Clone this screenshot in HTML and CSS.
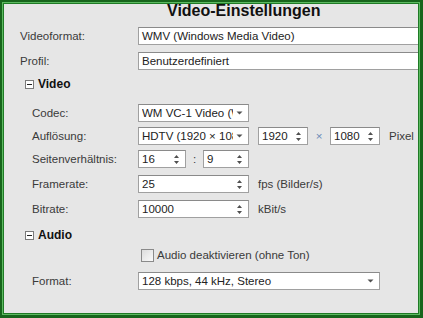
FILE: index.html
```html
<!DOCTYPE html>
<html lang="de">
<head>
    <meta charset="UTF-8">
    <meta name="viewport" content="width=device-width, initial-scale=1.0">
    <title>Video-Einstellungen</title>
    <link rel="stylesheet" href="styles.css">
</head>
<body>
    <div class="frame">
        <div class="frame-mid">
            <div class="content">
                <h1 class="title">Video-Einstellungen</h1>

                <div class="row top r-first">
                    <span class="label">Videoformat:</span>
                    <div class="field long">WMV (Windows Media Video)</div>
                </div>
                <div class="row top r7">
                    <span class="label">Profil:</span>
                    <div class="field long">Benutzerdefiniert</div>
                </div>

                <div class="row head r5">
                    <span class="toggle"></span>
                    <span>Video</span>
                </div>

                <div class="row sub r11">
                    <span class="label">Codec:</span>
                    <div class="field select w111">
                        <span class="val">WM VC-1 Video (W</span>
                        <svg class="drop" width="7" height="4" viewBox="0 0 7 4"><path d="M0.5 0.5H6.5L3.5 3.5Z" fill="#505050"/></svg>
                    </div>
                </div>
                <div class="row sub r5">
                    <span class="label">Auflösung:</span>
                    <div class="field select w111">
                        <span class="val">HDTV (1920 × 108</span>
                        <svg class="drop" width="7" height="4" viewBox="0 0 7 4"><path d="M0.5 0.5H6.5L3.5 3.5Z" fill="#505050"/></svg>
                    </div>
                    <div class="field spin w50 ml9">
                        <span class="val">1920</span>
                        <svg class="arrows" width="7" height="11" viewBox="0 0 7 11"><path d="M3.5 1L6 4H1Z M3.5 10L6 7H1Z" fill="#505050"/></svg>
                    </div>
                    <span class="times">×</span>
                    <div class="field spin w50">
                        <span class="val">1080</span>
                        <svg class="arrows" width="7" height="11" viewBox="0 0 7 11"><path d="M3.5 1L6 4H1Z M3.5 10L6 7H1Z" fill="#505050"/></svg>
                    </div>
                    <span class="unit">Pixel</span>
                </div>
                <div class="row sub r5">
                    <span class="label">Seitenverhältnis:</span>
                    <div class="field spin w48">
                        <span class="val">16</span>
                        <svg class="arrows" width="7" height="11" viewBox="0 0 7 11"><path d="M3.5 1L6 4H1Z M3.5 10L6 7H1Z" fill="#505050"/></svg>
                    </div>
                    <span class="colon">:</span>
                    <div class="field spin w46">
                        <span class="val">9</span>
                        <svg class="arrows" width="7" height="11" viewBox="0 0 7 11"><path d="M3.5 1L6 4H1Z M3.5 10L6 7H1Z" fill="#505050"/></svg>
                    </div>
                </div>
                <div class="row sub r7">
                    <span class="label">Framerate:</span>
                    <div class="field spin w111">
                        <span class="val">25</span>
                        <svg class="arrows" width="7" height="11" viewBox="0 0 7 11"><path d="M3.5 1L6 4H1Z M3.5 10L6 7H1Z" fill="#505050"/></svg>
                    </div>
                    <span class="unit">fps (Bilder/s)</span>
                </div>
                <div class="row sub r7">
                    <span class="label">Bitrate:</span>
                    <div class="field spin w111">
                        <span class="val">10000</span>
                        <svg class="arrows" width="7" height="11" viewBox="0 0 7 11"><path d="M3.5 1L6 4H1Z M3.5 10L6 7H1Z" fill="#505050"/></svg>
                    </div>
                    <span class="unit">kBit/s</span>
                </div>

                <div class="row head r8">
                    <span class="toggle"></span>
                    <span>Audio</span>
                </div>

                <div class="row sub r2">
                    <span class="label"></span>
                    <label class="check"><span class="box"></span>Audio deaktivieren (ohne Ton)</label>
                </div>
                <div class="row sub r8">
                    <span class="label">Format:</span>
                    <div class="field select w242">
                        <span class="val">128 kbps, 44 kHz, Stereo</span>
                        <svg class="drop" width="7" height="4" viewBox="0 0 7 4"><path d="M0.5 0.5H6.5L3.5 3.5Z" fill="#505050"/></svg>
                    </div>
                </div>
            </div>
        </div>
    </div>
</body>
</html>
```

FILE: styles.css
```css
* {
    margin: 0;
    padding: 0;
    box-sizing: border-box;
}

body {
    width: 423px;
    height: 318px;
    font-family: "Liberation Sans", Arial, sans-serif;
    font-size: 11.5px;
    color: #3a3a3a;
}

.frame {
    width: 423px;
    height: 318px;
    border: 2px solid #17651c;
    border-right-width: 3px;
    border-bottom-width: 3px;
}

.frame-mid {
    height: 100%;
    border: 1px solid #5cba60;
}

.content {
    height: 100%;
    border: 1px solid #1f7a26;
    background: #e6e6e6;
    overflow: hidden;
}

.title {
    font-size: 16px;
    font-weight: bold;
    color: #111;
    line-height: 18px;
    margin-top: -2px;
    padding-left: 163px;
}

.row {
    display: flex;
    align-items: center;
    height: 18px;
}

.r-first { margin-top: 7px; }
.r2 { margin-top: 2px; }
.r5 { margin-top: 5px; }
.r7 { margin-top: 7px; }
.r8 { margin-top: 8px; }
.r11 { margin-top: 11px; }

.top { padding-left: 16px; }
.top .label { width: 118px; flex: none; }

.sub { padding-left: 28px; }
.sub .label { width: 106px; flex: none; }

.head {
    padding-left: 21px;
    font-weight: bold;
    font-size: 12px;
    color: #111;
    gap: 4px;
}

.toggle {
    position: relative;
    width: 9px;
    height: 9px;
    border: 1px solid #7a7a7a;
    background: #fff;
}

.toggle::after {
    content: "";
    position: absolute;
    left: 1px;
    top: 3px;
    width: 5px;
    height: 1px;
    background: #222;
}

.field {
    display: flex;
    align-items: center;
    flex: none;
    height: 18px;
    background: #fff;
    border: 1px solid #a0a0a0;
    border-top-color: #8a8a8a;
    padding-left: 3px;
    color: #222;
    white-space: nowrap;
    overflow: hidden;
}

.long { width: 300px; }
.w46 { width: 46px; }
.w48 { width: 48px; }
.w50 { width: 50px; }
.w111 { width: 111px; }
.w242 { width: 242px; }
.ml9 { margin-left: 9px; }

.val {
    flex: 1;
    overflow: hidden;
}

.drop {
    flex: none;
    margin: 0 5px 0 3px;
}

.arrows {
    flex: none;
    margin: 0 5px 0 2px;
}

.times {
    width: 22px;
    text-align: center;
    color: #6a8ab8;
}

.colon {
    width: 17px;
    text-align: center;
}

.unit {
    margin-left: 9px;
}

.check {
    display: flex;
    align-items: center;
    gap: 3px;
    margin-left: 3px;
}

.box {
    width: 13px;
    height: 13px;
    border: 1px solid #8a8a8a;
    background: linear-gradient(135deg, #dcdcdc, #fafafa);
}
```
